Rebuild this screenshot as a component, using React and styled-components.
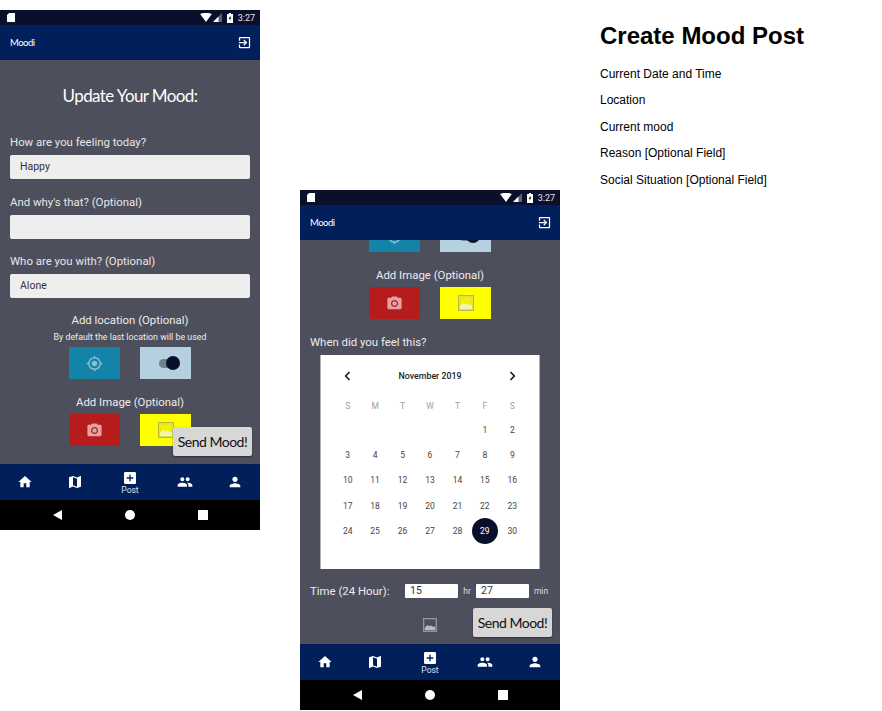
import React from "react";
import styled, { createGlobalStyle } from "styled-components";
import { MdHome, MdMap, MdAddBox, MdPeople, MdPerson, MdExitToApp, MdCameraAlt, MdGpsFixed } from "react-icons/md";

const Global = createGlobalStyle`
  html, body { margin: 0; padding: 0; background: #fff; }
  body { font-family: "Roboto", "Liberation Sans", sans-serif; }
`;

const days = [
  ["", "", "", "", "", 1, 2],
  [3, 4, 5, 6, 7, 8, 9],
  [10, 11, 12, 13, 14, 15, 16],
  [17, 18, 19, 20, 21, 22, 23],
  [24, 25, 26, 27, 28, 29, 30],
];

const StatusIcons = () => (
  <StatusRight>
    <svg width="12" height="9" viewBox="0 0 13 10"><path d="M0 1.2C3.8-.8 9.2-.8 13 1.2L6.5 10z" fill="#fff" /></svg>
    <SignalIcon width="9" height="9" viewBox="0 0 9 9"><path d="M9 0v9H0z" fill="#fff" opacity=".35" /><path d="M5.5 3.5V9H0z" fill="#fff" /></SignalIcon>
    <svg width="6" height="10" viewBox="0 0 6 10"><path d="M2 0h2v1h2v9H0V1h2z" fill="#fff" /><path d="M3.4 2.4 1.6 5.7h1.2l-.3 2 1.9-3.2H3.2z" fill="#0a0f2c" /></svg>
    <Clock>3:27</Clock>
  </StatusRight>
);

const TopChrome = () => (
  <>
    <StatusBar>
      <svg width="8" height="9" viewBox="0 0 8 9"><path d="M2 0h6v9H0V2z" fill="#fff" /></svg>
      <StatusIcons />
    </StatusBar>
    <AppBar>
      <Brand>Moodi</Brand>
      <MdExitToApp size={15} color="#fff" />
    </AppBar>
  </>
);

const BottomChrome = () => (
  <>
    <TabBar>
      <Tab><MdHome size={16} /></Tab>
      <Tab><MdMap size={16} /></Tab>
      <Tab><MdAddBox size={16} /><TabLabel>Post</TabLabel></Tab>
      <Tab><MdPeople size={16} /></Tab>
      <Tab><MdPerson size={16} /></Tab>
    </TabBar>
    <NavBar>
      <svg width="9" height="10" viewBox="0 0 9 10"><path d="M9 0v10L0 5z" fill="#fff" /></svg>
      <svg width="10" height="10" viewBox="0 0 10 10"><circle cx="5" cy="5" r="5" fill="#fff" /></svg>
      <svg width="10" height="10" viewBox="0 0 10 10"><rect width="10" height="10" rx=".5" fill="#fff" /></svg>
    </NavBar>
  </>
);

const PhotoGlyph = ({ size = 16, dim }) => (
  <svg width={size} height={size} viewBox="0 0 16 16">
    <rect x=".5" y=".5" width="15" height="15" fill={dim ? "#6a6c76" : "#e4e46a"} stroke={dim ? "#9a9ba2" : "#b9b93e"} />
    <rect x="2" y="2" width="12" height="12" fill={dim ? "#4d4f5c" : "#f2f200"} stroke={dim ? "none" : "#cfcf40"} strokeWidth=".6" />
    <path d="M2 11l3-3 2 1.5 2-1 2 1.2 3 .3V14H2z" fill={dim ? "#b9bac0" : "#f6f5b0"} />
  </svg>
);

const LocationButtons = ({ clipped }) => {
  const Row = clipped ? ClippedRow : ButtonRow;
  return (
    <Row $top={4.5}>
      <ActionButton $bg="#1383a8"><MdGpsFixed size={17} color="rgba(255,255,255,.5)" /></ActionButton>
      <ActionButton $bg="#b5d0de">
        <SwitchTrack><SwitchKnob /></SwitchTrack>
      </ActionButton>
    </Row>
  );
};

const ImageButtons = () => (
  <ButtonRow>
    <ActionButton $bg="#b71c1c"><MdCameraAlt size={17} color="rgba(255,255,255,.6)" /></ActionButton>
    <ActionButton $bg="#ffff00"><PhotoGlyph /></ActionButton>
  </ButtonRow>
);

const Calendar = () => (
  <CalendarCard>
    <MonthRow>
      <svg width="7" height="10" viewBox="0 0 7 10"><path d="M5.5 1 1.7 5l3.8 4" fill="none" stroke="#222" strokeWidth="1.7" /></svg>
      <MonthName>November 2019</MonthName>
      <svg width="7" height="10" viewBox="0 0 7 10"><path d="M1.5 1l3.8 4-3.8 4" fill="none" stroke="#222" strokeWidth="1.7" /></svg>
    </MonthRow>
    <WeekRow>
      {["S", "M", "T", "W", "T", "F", "S"].map((d, i) => <WeekDay key={i}>{d}</WeekDay>)}
    </WeekRow>
    <DayGrid>
      {days.flat().map((d, i) => <Day key={i} $selected={d === 29}>{d}</Day>)}
    </DayGrid>
  </CalendarCard>
);

export default function App() {
  return (
    <Page>
      <Global />
      <Phone $top={10}>
        <TopChrome />
        <Content>
          <Title>Update Your Mood:</Title>
          <Field>
            <FieldLabel>How are you feeling today?</FieldLabel>
            <FakeInput>Happy</FakeInput>
          </Field>
          <Field>
            <FieldLabel>And why's that? (Optional)</FieldLabel>
            <FakeInput />
          </Field>
          <Field>
            <FieldLabel>Who are you with? (Optional)</FieldLabel>
            <FakeInput>Alone</FakeInput>
          </Field>
          <CenterLabel $top={14}>Add location (Optional)</CenterLabel>
          <Hint>By default the last location will be used</Hint>
          <LocationButtons />
          <CenterLabel $top={15}>Add Image (Optional)</CenterLabel>
          <ImageButtons />
          <SendButton $floating>Send Mood!</SendButton>
        </Content>
        <BottomChrome />
      </Phone>

      <Phone $top={190}>
        <TopChrome />
        <Content>
          <LocationButtons clipped />
          <CenterLabel $top={15}>Add Image (Optional)</CenterLabel>
          <ImageButtons />
          <WhenLabel>When did you feel this?</WhenLabel>
          <Calendar />
          <TimeRow>
            <TimeLabel>Time (24 Hour):</TimeLabel>
            <TimeInput>15</TimeInput>
            <Unit>hr</Unit>
            <TimeInput>27</TimeInput>
            <Unit $wide>min</Unit>
          </TimeRow>
          <SendRow>
            <PhotoGlyph size={14} dim />
            <SendButton>Send Mood!</SendButton>
          </SendRow>
        </Content>
        <BottomChrome />
      </Phone>

      <Notes>
        <Heading>Create Mood Post</Heading>
        <Note>Current Date and Time</Note>
        <Note>Location</Note>
        <Note>Current mood</Note>
        <Note>Reason [Optional Field]</Note>
        <Note>Social Situation [Optional Field]</Note>
      </Notes>
    </Page>
  );
}

const Page = styled.div`
  display: flex;
  align-items: flex-start;
  gap: 40px;
  width: 882px;
  height: 711px;
  overflow: hidden;
`;

const Phone = styled.div`
  display: flex;
  flex-direction: column;
  flex: 0 0 260px;
  height: 520px;
  margin-top: ${({ $top }) => $top}px;
  background: #4d4f5c;
`;

const StatusBar = styled.div`
  display: flex;
  align-items: center;
  justify-content: space-between;
  flex: 0 0 15px;
  padding: 0 5px 0 7px;
  background: #0a0f2c;
`;

const StatusRight = styled.div`
  display: flex;
  align-items: center;
`;

const SignalIcon = styled.svg`
  margin: 0 5px 0 1px;
`;

const Clock = styled.span`
  margin-left: 5px;
  font-size: 9px;
  color: #e4e5ea;
`;

const AppBar = styled.div`
  display: flex;
  align-items: center;
  justify-content: space-between;
  flex: 0 0 35px;
  padding: 0 8px 0 10px;
  background: #001f5b;
`;

const Brand = styled.span`
  font-family: "Lato", sans-serif;
  font-size: 9.5px;
  letter-spacing: -.5px;
  color: #fff;
`;

const Content = styled.div`
  position: relative;
  flex: 1;
  min-height: 0;
  color: #ececee;
`;

const Title = styled.h1`
  margin: 23px 0 25px;
  font-family: "Lato", sans-serif;
  font-size: 17px;
  line-height: 26px;
  font-weight: 400;
  letter-spacing: -.6px;
  text-align: center;
  color: #fff;
`;

const Field = styled.div`
  margin: 14.5px 10px 0;
`;

const FieldLabel = styled.div`
  font-size: 11.4px;
  line-height: 16px;
  color: #e6e6e8;
`;

const FakeInput = styled.div`
  box-sizing: border-box;
  height: 24px;
  margin-top: 5px;
  padding: 0 10px;
  border-radius: 2px;
  background: #eeeeee;
  font-size: 10.5px;
  line-height: 24px;
  color: #333;
`;

const CenterLabel = styled.div`
  margin-top: ${({ $top }) => $top}px;
  font-size: 11.4px;
  line-height: 16px;
  text-align: center;
  color: #ececee;
`;

const Hint = styled.div`
  margin-top: 3.5px;
  font-size: 8.85px;
  line-height: 11px;
  text-align: center;
  color: #ececee;
`;

const ButtonRow = styled.div`
  display: flex;
  justify-content: center;
  gap: 20px;
  margin-top: ${({ $top = 4 }) => $top}px;
`;

const ClippedRow = styled(ButtonRow)`
  height: 12px;
  margin-top: 0;
  overflow: hidden;
  align-items: flex-end;
`;

const ActionButton = styled.div`
  display: flex;
  align-items: center;
  justify-content: center;
  flex: 0 0 51px;
  height: 32px;
  background: ${({ $bg }) => $bg};
`;

const SwitchTrack = styled.div`
  position: relative;
  width: 18px;
  height: 9px;
  margin-left: 4px;
  border-radius: 5px;
  background: #6f8292;
`;

const SwitchKnob = styled.div`
  position: absolute;
  top: -2.5px;
  right: -3px;
  width: 14px;
  height: 14px;
  border-radius: 50%;
  background: #0a0f2c;
`;

const SendButton = styled.div`
  ${({ $floating }) => $floating && "position: absolute; left: 173px; top: 367px;"}
  box-sizing: border-box;
  width: 79px;
  height: 29px;
  border-radius: 2px;
  background: #d6d7d6;
  box-shadow: 0 1px 2px rgba(0, 0, 0, .4);
  font-family: "Lato", sans-serif;
  font-size: 14px;
  letter-spacing: -.5px;
  line-height: 29px;
  text-align: center;
  white-space: nowrap;
  color: #111;
`;

const WhenLabel = styled.div`
  margin: 15px 10px 0;
  font-size: 11.4px;
  line-height: 16px;
  color: #ececee;
`;

const CalendarCard = styled.div`
  box-sizing: border-box;
  height: 214px;
  margin: 5px 20px 0;
  padding: 0 13px;
  background: #fff;
  border: 1px solid #aeb0b8;
  border-width: 0 1px;
`;

const MonthRow = styled.div`
  display: flex;
  align-items: center;
  justify-content: space-between;
  height: 42px;
  padding: 0 10px;
`;

const MonthName = styled.span`
  font-size: 8.8px;
  font-weight: 500;
  color: #222;
`;

const WeekRow = styled.div`
  display: grid;
  grid-template-columns: repeat(7, 1fr);
  height: 16px;
  margin-top: 1px;
`;

const WeekDay = styled.span`
  font-size: 8.5px;
  line-height: 16px;
  text-align: center;
  color: #a0a0a0;
`;

const DayGrid = styled.div`
  display: grid;
  grid-template-columns: repeat(7, 1fr);
  grid-auto-rows: 25.3px;
  margin-top: 3px;
`;

const Day = styled.span`
  justify-self: center;
  align-self: center;
  width: 26px;
  height: 26px;
  border-radius: 50%;
  background: ${({ $selected }) => ($selected ? "#0a0f2c" : "transparent")};
  font-size: 8.5px;
  line-height: 26px;
  text-align: center;
  color: ${({ $selected }) => ($selected ? "#fff" : "#444")};
`;

const TimeRow = styled.div`
  display: flex;
  align-items: center;
  height: 14px;
  margin-top: 14.5px;
  padding-left: 10px;
`;

const TimeLabel = styled.span`
  flex: 0 0 95px;
  font-size: 11.4px;
  color: #ececee;
`;

const TimeInput = styled.div`
  box-sizing: border-box;
  width: 53px;
  height: 14px;
  padding-left: 5px;
  border-radius: 1px;
  background: #fff;
  font-size: 10.5px;
  line-height: 14px;
  color: #333;
`;

const Unit = styled.span`
  width: ${({ $wide }) => ($wide ? 24 : 18)}px;
  font-size: 8.5px;
  text-align: center;
  color: #dcdcdf;
`;

const SendRow = styled.div`
  display: flex;
  align-items: center;
  height: 29px;
  margin-top: 10px;
  padding-left: 123px;
  gap: 36px;
  svg { margin-top: 5px; }
`;

const TabBar = styled.div`
  display: grid;
  grid-template-columns: 50px 50px 60px 50px 50px;
  flex: 0 0 36px;
  background: #001f5b;
`;

const Tab = styled.div`
  display: flex;
  flex-direction: column;
  align-items: center;
  justify-content: center;
  color: #fff;
`;

const TabLabel = styled.span`
  font-size: 8.5px;
  line-height: 9px;
  color: #dfe2ea;
`;

const NavBar = styled.div`
  display: grid;
  grid-template-columns: repeat(3, 73px);
  justify-content: center;
  justify-items: center;
  align-items: center;
  flex: 0 0 30px;
  background: #000;
`;

const Notes = styled.div`
  flex: 1;
  margin-top: 22px;
  font-family: "Liberation Sans", Arial, sans-serif;
  color: #000;
`;

const Heading = styled.h2`
  margin: 0 0 17px;
  font-size: 24px;
  line-height: 28px;
  font-weight: 700;
`;

const Note = styled.p`
  margin: 0 0 12.4px;
  font-size: 12px;
  line-height: 14px;
`;
